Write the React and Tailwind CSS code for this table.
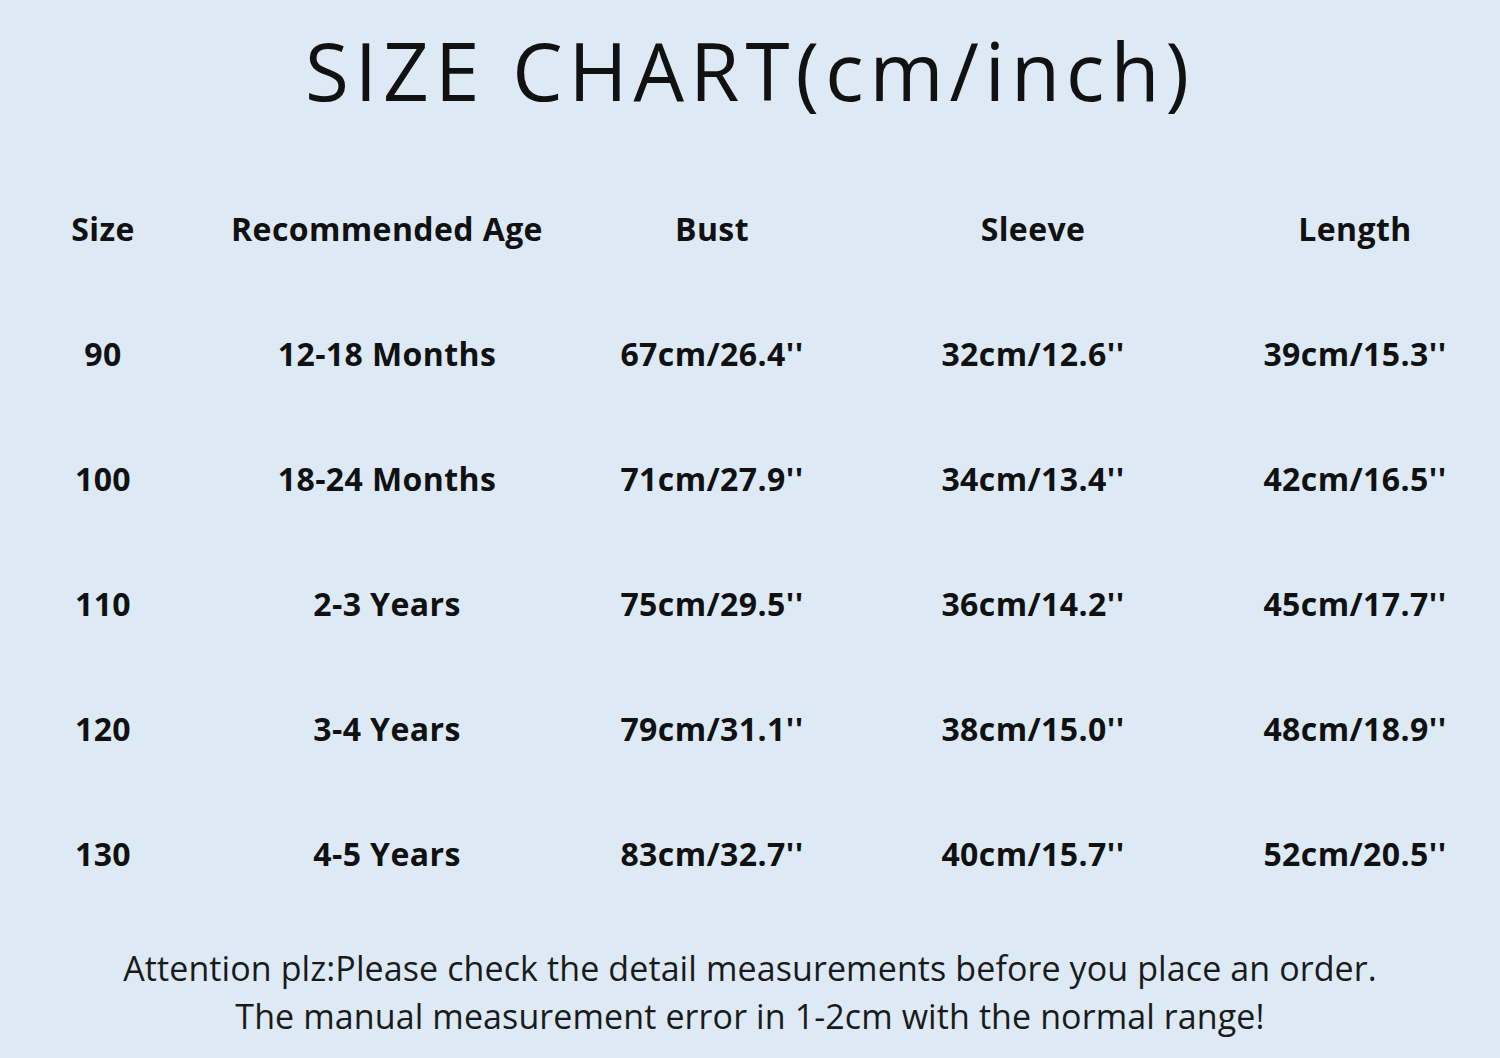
import React from 'react';

const headers = ['Size', 'Recommended Age', 'Bust', 'Sleeve', 'Length'];

const rows = [
    ['90', '12-18 Months', "67cm/26.4''", "32cm/12.6''", "39cm/15.3''"],
    ['100', '18-24 Months', "71cm/27.9''", "34cm/13.4''", "42cm/16.5''"],
    ['110', '2-3 Years', "75cm/29.5''", "36cm/14.2''", "45cm/17.7''"],
    ['120', '3-4 Years', "79cm/31.1''", "38cm/15.0''", "48cm/18.9''"],
    ['130', '4-5 Years', "83cm/32.7''", "40cm/15.7''", "52cm/20.5''"],
];

const App = () => {
    return (
        <div className="w-[1500px] h-[1058px] bg-[#ddeaf6] flex flex-col text-[#111]">
            {/* Title */}
            <div className="h-[166px] flex items-start justify-center pt-[20px]">
                <h1 className="font-['Open_Sans',sans-serif] text-[80px] leading-[100px] font-normal tracking-[6px]">
                    SIZE CHART(cm/inch)
                </h1>
            </div>

            {/* Table */}
            <div className="grid grid-cols-[206px_362px_288px_354px_290px] auto-rows-[125px] font-['Open_Sans',sans-serif] font-bold text-[32px] tracking-[0.4px]">
                {headers.map((h) => (
                    <div key={h} className="flex items-center justify-center">{h}</div>
                ))}
                {rows.map((r) =>
                    r.map((c, i) => (
                        <div key={r[0] + i} className="flex items-center justify-center">{c}</div>
                    ))
                )}
            </div>

            {/* Footer note */}
            <div className="flex flex-col items-center pt-[28px] font-['Open_Sans',sans-serif] text-[34px] leading-[48px] tracking-[0.1px] text-[#1a1a1a]">
                <p>Attention plz:Please check the detail measurements before you place an order.</p>
                <p>The manual measurement error in 1-2cm with the normal range!</p>
            </div>
        </div>
    );
};

export default App;
